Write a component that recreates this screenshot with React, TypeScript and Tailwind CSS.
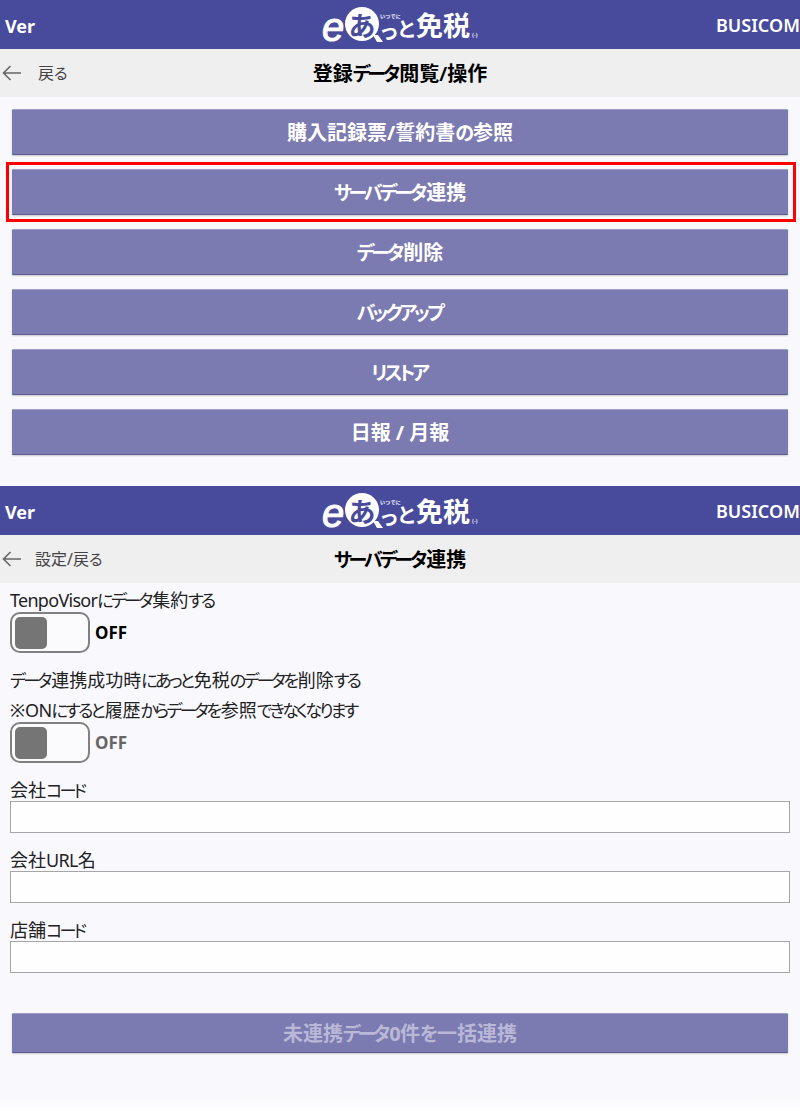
import React from "react";

const FONT = "font-['Noto_Sans','Noto_Sans_CJK_JP',sans-serif] [font-feature-settings:'palt']";

function T({ s }: { s: string }) {
  const parts = s.split(/([\u3040-\u30ff]+|[A-Za-z0-9]+)/).filter(Boolean);
  return (
    <>
      {parts.map((p, i) =>
        /^[\u3040-\u30ff]/.test(p) ? (
          <span key={i} className="pr-[0.1em] text-[0.95em] tracking-[-0.16em]">{p}</span>
        ) : /^[A-Za-z0-9]/.test(p) ? (
          <span key={i} className="tracking-[-0.04em]">{p}</span>
        ) : (
          <span key={i}>{p}</span>
        )
      )}
    </>
  );
}

function Logo() {
  return (
    <div className="relative h-[49px] w-[158px] font-['Noto_Sans_CJK_JP',sans-serif] font-bold leading-none text-white [font-feature-settings:'normal']">
      <span className="absolute left-0 top-[7px] font-['Liberation_Sans',sans-serif] text-[40px] font-normal italic leading-none [-webkit-text-stroke:1px_white]">e</span>
      <span className="absolute left-[23px] top-[7px] flex h-[34px] w-[34px] items-center justify-center rounded-full bg-white text-[27px] text-[#484b9c]">
        あ
        <svg viewBox="0 0 10 8" className="absolute bottom-[-2px] right-[-4px] h-[8px] w-[10px]">
          <path d="M0 0 L4 7 L10 7 L5 0 Z" fill="#fff" />
        </svg>
      </span>
      <span className="absolute left-[59px] top-[21px] text-[20px]">っ</span>
      <span className="absolute left-[76px] top-[19px] text-[20px]">と</span>
      <span className="absolute left-[94px] top-[11px] text-[27px]">免税</span>
      <span className="absolute left-[58px] top-[13px] text-[5px] tracking-[0.5px]">いつでに</span>
      <span className="absolute left-[150px] top-[32px] text-[5px]">(-)</span>
    </div>
  );
}

function Header() {
  return (
    <header className="flex h-[49px] items-center bg-[#484b9c] text-white">
      <span className="w-[322px] flex-none pl-[5px] pt-[3px] text-[18px] font-bold">Ver</span>
      <Logo />
      <span className="ml-auto w-[84px] flex-none overflow-hidden whitespace-nowrap pt-[1px] text-[18px] font-semibold">BUSICOM</span>
    </header>
  );
}

function SubBar({ back, title, gap }: { back: string; title: string; gap: string }) {
  return (
    <div className="relative flex h-[48px] items-center justify-center bg-[#efefef]">
      <div className={`absolute left-[2px] top-0 flex h-full items-center text-[#555] ${gap}`}>
        <svg viewBox="0 0 20 16" className="h-[16px] w-[20px]" fill="none" stroke="#666" strokeWidth="1.6">
          <path d="M19 8 H1.5 M8.5 1 L1.5 8 L8.5 15" />
        </svg>
        <span className="text-[16px] text-[#444]"><T s={back} /></span>
      </div>
      <h1 className="pt-[2px] text-[20px] font-semibold text-black"><T s={title} /></h1>
    </div>
  );
}

function Btn({ label, h = "h-[46px]", dim = false }: { label: string; h?: string; dim?: boolean }) {
  return (
    <button
      className={`flex w-full items-center justify-center rounded-[1px] border-t border-t-[#a09fc8] border-b border-b-[#5e5c8e] bg-[#7b7ab1] pt-[2px] text-[20px] font-bold shadow-[0_1px_2px_rgba(0,0,0,0.2)] ${h} ${dim ? "text-[#b9b8d7]" : "text-white"}`}
    >
      <span><T s={label} /></span>
    </button>
  );
}

function Toggle({ dim = false }: { dim?: boolean }) {
  return (
    <div className="flex items-center">
      <div className="flex h-[41px] w-[80px] items-center rounded-[10px] border-2 border-[#808080] bg-[#fbfbfe] pl-[3px]">
        <div className="h-[32px] w-[32px] rounded-[5px] bg-[#757575]" />
      </div>
      <span className={`ml-[5px] text-[17px] font-bold ${dim ? "text-[#666]" : "text-black"}`}>OFF</span>
    </div>
  );
}

function Field({ label }: { label: string }) {
  return (
    <div>
      <div className="h-[24px] text-[18px] leading-[24px] text-[#222]"><T s={label} /></div>
      <div className="mt-[-1px] h-[32px] border border-[#a6a6a6] bg-[#fefefe]" />
    </div>
  );
}

export default function App() {
  const items = ["サーバデータ連携", "データ削除", "バックアップ", "リストア", "日報 / 月報"];
  return (
    <div className={`${FONT} relative h-[1114px] w-[800px] overflow-hidden bg-[#f8f8fd]`}>
      <Header />
      <SubBar back="戻る" title="登録データ閲覧/操作" gap="gap-[16px]" />
      <div className="flex flex-col gap-[14px] px-[12px] pt-[12px]">
        <Btn label="購入記録票/誓約書の参照" />
        {items.map((t) => (
          <Btn key={t} label={t} />
        ))}
      </div>
      <div className="absolute left-[6px] top-[162px] h-[60px] w-[790px] border-[3px] border-[#ff0000]" />
      <div className="mt-[31px]">
        <Header />
        <SubBar back="設定/戻る" title="サーバデータ連携" gap="gap-[13px]" />
        <div className="px-[10px]">
          <div className="mt-[5px] h-[24px] text-[18px] leading-[24px] text-[#222]"><T s="TenpoVisorにデータ集約する" /></div>
          <Toggle />
          <div className="mt-[15px] h-[30px] text-[18px] leading-[24px] text-[#222]"><T s="データ連携成功時にあっと免税のデータを削除する" /></div>
          <div className="h-[24px] text-[18px] leading-[24px] text-[#222]"><T s="※ONにすると履歴からデータを参照できなくなります" /></div>
          <Toggle dim />
          <div className="mt-[15px] flex flex-col gap-[15px]">
            <Field label="会社コード" />
            <Field label="会社URL名" />
            <Field label="店舗コード" />
          </div>
        </div>
        <div className="mt-[40px] px-[12px]">
          <Btn label="未連携データ0件を一括連携" h="h-[40px]" dim />
        </div>
      </div>
      <div className="absolute bottom-0 left-0 h-[20px] w-full bg-gradient-to-b from-transparent to-white" />
    </div>
  );
}
